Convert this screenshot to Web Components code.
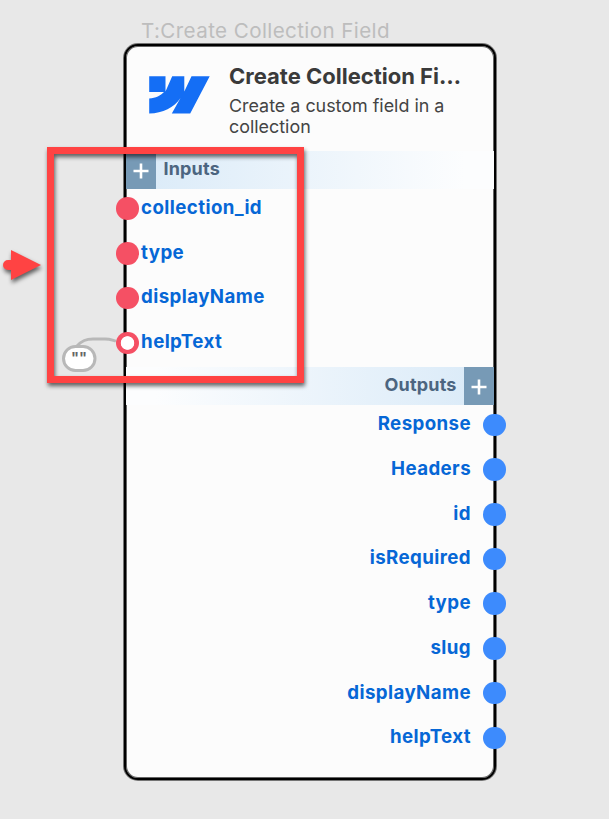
<!DOCTYPE html>
<html lang="en">
<head>
<meta charset="utf-8">
<title>Create Collection Field</title>
<style>
html,body{margin:0;height:819px;overflow:hidden;background:#e8e8e8}
body{font-family:Inter,"Liberation Sans",sans-serif}
</style>
</head>
<body>
<flow-canvas>
  <flow-node caption="T:Create Collection Field">
    <node-header slot="header" heading="Create Collection Fi…">Create a custom field in a collection</node-header>
    <port-section side="in" label="Inputs">
      <node-port side="in">collection_id</node-port>
      <node-port side="in">type</node-port>
      <node-port side="in">displayName</node-port>
      <node-port side="in" hollow>helpText</node-port>
    </port-section>
    <port-section side="out" label="Outputs">
      <node-port side="out">Response</node-port>
      <node-port side="out">Headers</node-port>
      <node-port side="out">id</node-port>
      <node-port side="out">isRequired</node-port>
      <node-port side="out">type</node-port>
      <node-port side="out">slug</node-port>
      <node-port side="out">displayName</node-port>
      <node-port side="out">helpText</node-port>
    </port-section>
  </flow-node>
  <value-pill slot="overlay">""</value-pill>
  <callout-marks slot="overlay"></callout-marks>
</flow-canvas>
<script>
const define = (name, render) => customElements.define(name, class extends HTMLElement {
  constructor() { super(); this.attachShadow({ mode: 'open' }); }
  connectedCallback() { this.shadowRoot.innerHTML = render(this); }
});

define('flow-canvas', () => `
<style>
:host{display:block;position:relative;width:609px;height:819px;box-sizing:border-box;padding:18px 0 0 124px;background:#e8e8e8;overflow:hidden}
</style>
<slot></slot><slot name="overlay"></slot>`);

define('flow-node', el => `
<style>
:host{display:flex;flex-direction:column;width:372px}
.caption{height:26px;padding-left:17px;font-size:20.6px;letter-spacing:.4px;line-height:25px;color:#bdbdbd;white-space:nowrap}
.card{box-sizing:border-box;height:736px;border:2px solid #000;border-radius:14px;background:#fcfcfc;box-shadow:0 0 0 1px rgba(0,0,0,.5),inset 0 0 0 1px rgba(0,0,0,.6);display:flex;flex-direction:column}
</style>
<div class="caption">${el.getAttribute('caption')}</div>
<div class="card"><slot name="header"></slot><slot></slot></div>`);

define('node-header', el => `
<style>
:host{display:flex;box-sizing:border-box;height:105px;padding:17px 12px 0 23px;gap:19px}
svg{flex:none;width:61px;height:38px;margin-top:13px}
.copy{display:flex;flex-direction:column}
.heading{font-size:22px;font-weight:700;line-height:26px;color:#3a3a3a;white-space:nowrap}
.text{font-size:17.9px;line-height:21.3px;margin-top:6px;width:225px;color:#444}
</style>
<svg viewBox="0 0 61 38"><path fill="#146ef5" d="M.2 .3H16.5V15.5L23.2 .3H35.3V15.5L42.5 .3H60.7L41.2 37.6H22.8L31.5 22C25 31.7 14 37.2.2 37.6V22.4C7 22 11.5 19.6 15 16H.2Z"/></svg>
<div class="copy"><div class="heading">${el.getAttribute('heading')}</div><div class="text"><slot></slot></div></div>`);

define('port-section', el => `
<style>
:host{display:block}
:host([side=in]){height:216.2px}
.bar{height:37.5px;display:flex;background:linear-gradient(90deg,#d9eaf8,#fcfdfe 92%)}
:host([side=out]) .bar{flex-direction:row-reverse;background:linear-gradient(270deg,#d9eaf8,#fcfdfe 92%)}
.add{width:30.4px;display:flex;align-items:center;justify-content:center;background:#779ab6;box-sizing:border-box;padding-top:3px}
.label{padding:7px 7px 0;font-size:18px;letter-spacing:.2px;font-weight:700;line-height:22px;color:#4c6580}
.ports{display:flex;flex-direction:column;margin-top:-2.2px}
</style>
<div class="bar"><div class="add"><svg width="16" height="16" viewBox="0 0 16 16"><path d="M8 .5V15.5M.5 8H15.5" stroke="#fff" stroke-width="2.6"/></svg></div><div class="label">${el.getAttribute('label')}</div></div>
<div class="ports"><slot></slot></div>`);

define('node-port', () => `
<style>
:host{display:flex;align-items:center;height:44.73px;margin-left:-10px;gap:2.5px;color:#0667d6;font-size:18.7px;letter-spacing:.4px;font-weight:700;line-height:22px}
:host([side=out]){flex-direction:row-reverse;margin:0 -11.7px 0 0;gap:12.1px}
.dot{flex:none;width:22.6px;height:22.6px;border-radius:50%;background:#f55064}
:host([side=out]) .dot{background:#3d8bfd}
:host([hollow]) .dot{background:radial-gradient(circle,#fff 6.4px,#f55064 7.1px)}
.name{padding-bottom:1.3px}
</style>
<span class="dot"></span><span class="name"><slot></slot></span>`);

define('value-pill', () => `
<style>
:host{position:absolute;left:61.5px;top:337px;width:56px;height:36px;font-size:14.5px;line-height:18px;font-weight:700;color:#666}
svg{display:block}
.value{position:absolute;left:0;top:12px;width:35px;text-align:center}
</style>
<svg width="56" height="36" viewBox="0 0 56 36"><path d="M15 9C20 3.5 24 2 31 2H43C48 2 50 3 54 4" fill="none" stroke="#b8b8b8" stroke-width="2.8"/><rect x="1.5" y="9.5" width="31.5" height="24" rx="12" fill="#fff" stroke="#b8b8b8" stroke-width="3"/></svg>
<span class="value"><slot></slot></span>`);

define('callout-marks', () => `
<style>
:host{position:absolute;inset:0;pointer-events:none}
svg{display:block;filter:drop-shadow(1px 3px 2px rgba(0,0,0,.6))}
</style>
<svg width="609" height="819" viewBox="0 0 609 819" fill="none"><rect x="50.5" y="150.5" width="250" height="229" stroke="#ff4343" stroke-width="7"/><path d="M11 250L41 265L11 280V270H8A5 5 0 0 1 8 260H11Z" fill="#ff4343"/></svg>`);
</script>
</body>
</html>
